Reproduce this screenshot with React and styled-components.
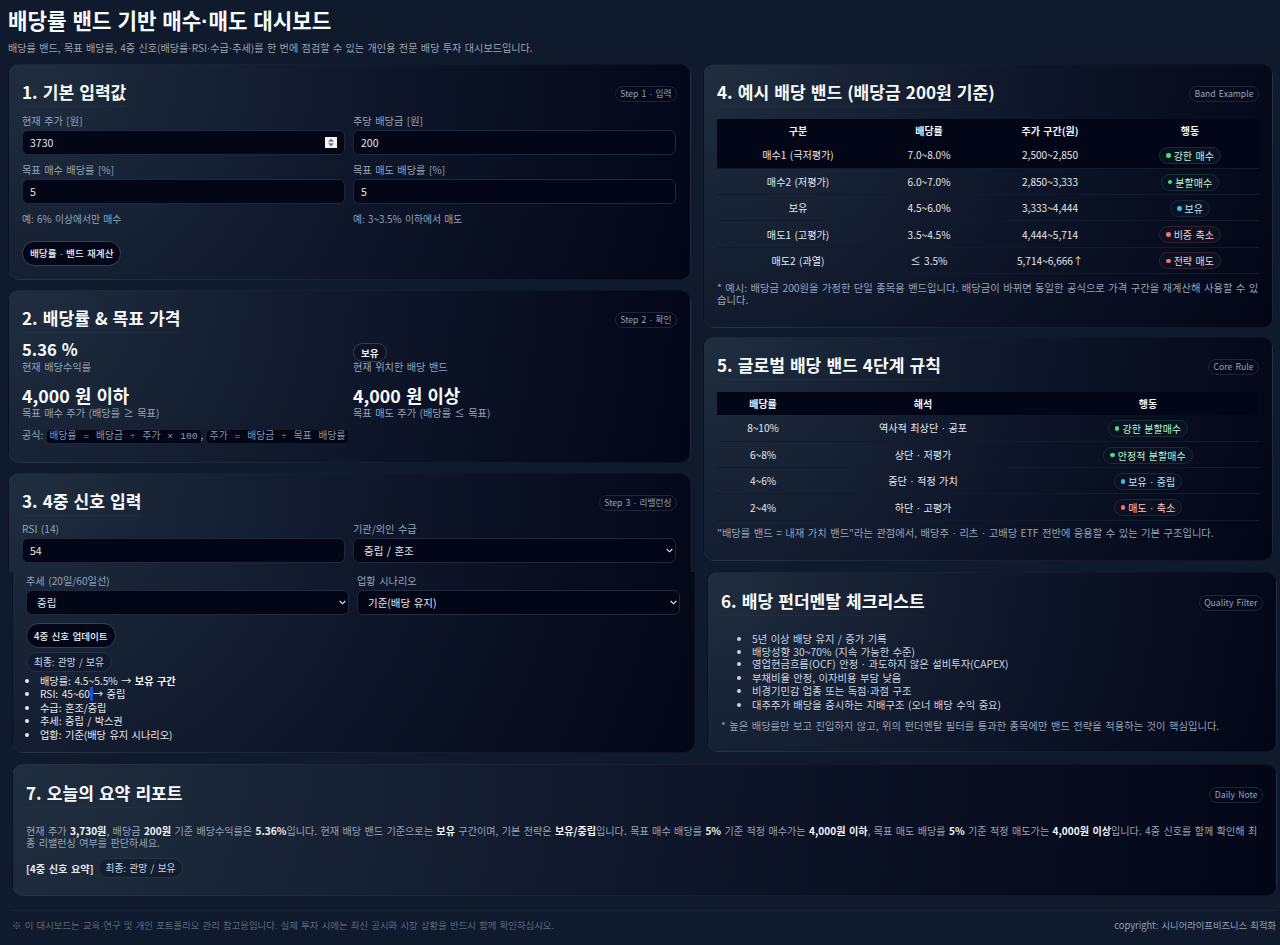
import React from 'react';
import styled, { createGlobalStyle } from 'styled-components';

const GlobalStyle = createGlobalStyle`
  * { box-sizing: border-box; }
  html, body { margin: 0; padding: 0; background: #0f1a2c; }
  body {
    font-family: "Noto Sans CJK KR", "Noto Sans", sans-serif;
    color: #e5e7eb;
    font-size: 10.5px;
    word-spacing: 0.11em;
  }
`;

const Page = styled.div`
  width: 1280px;
  height: 945px;
  overflow: hidden;
`;

const Header = styled.header`
  padding: 6px 8px 0;
  height: 63.5px;
`;

const Title = styled.h1`
  margin: 0;
  font-size: 21.2px;
  line-height: 28px;
  font-weight: 700;
  color: #f8fafc;
`;

const Subtitle = styled.p`
  margin: 5px 0 0;
  font-size: 10.1px;
  line-height: 14px;
  color: #9ca3af;
`;

const Dot = styled.span`
  font-family: "Liberation Sans", sans-serif;
`;

const Grid = styled.div`
  display: grid;
  grid-template-columns: 683px 570px;
  column-gap: 12px;
  padding-left: ${props => (props.$shifted ? '12px' : '8px')};
`;

const Column = styled.div`
  display: flex;
  flex-direction: column;
  gap: ${props => props.$gap || 10}px;
`;

const Card = styled.section`
  border: 1px solid rgba(148, 163, 184, 0.06);
  border-radius: 12px;
  padding: 14px 13px 13px;
  background: radial-gradient(circle at top left, #1f2e3f 0%, #0f172a 50%, #020617 100%);
  height: ${props => props.$height}px;
`;

const CardTop = styled(Card)`
  border-bottom: none;
  border-radius: 12px 12px 0 0;
  background-size: 683px 280px;
  overflow: hidden;
`;

const CardBottom = styled(Card)`
  border-top: none;
  border-radius: 0 0 12px 12px;
  background-size: 683px 280px;
  background-position: 0 -100px;
  padding-top: 2px;
`;

const WideCard = styled(Card)`
  width: 1265px;
  margin: 11.5px 0 0 12px;
`;

const CardHead = styled.div`
  display: flex;
  align-items: center;
  justify-content: space-between;
  height: 31px;
  margin-bottom: ${props => props.$after || 0}px;
`;

const CardTitle = styled.h2`
  margin: 0 0 3px;
  font-size: 17.1px;
  line-height: 28px;
  font-weight: 700;
  color: #f8fafc;
  border-bottom: 1px solid rgba(148, 163, 184, 0.05);
`;

const StepPill = styled.span`
  font-size: 8.7px;
  line-height: 14px;
  padding: 0 4.5px;
  color: #94a3b8;
  border: 1px solid #1b2739;
  border-radius: 999px;
  white-space: nowrap;
`;

const FieldRow = styled.div`
  display: grid;
  grid-template-columns: 323px 323px;
  column-gap: 8px;
  margin-bottom: ${props => props.$after || 0}px;
`;

const Field = styled.label`
  display: block;
  position: relative;
`;

const FieldLabel = styled.span`
  display: block;
  font-size: 10.2px;
  line-height: 14px;
  margin-bottom: 2px;
  color: #94a3b8;
`;

const TextInput = styled.input`
  display: block;
  width: 100%;
  height: 25px;
  padding: 0 7px;
  background: #020617;
  color: #e5e7eb;
  border: 1px solid #1e293b;
  border-radius: 6px;
  font-family: "Noto Sans CJK KR", "Noto Sans", sans-serif;
  font-size: 10.5px;
  outline: none;
`;

const Select = styled.select`
  display: block;
  width: 100%;
  height: 25px;
  padding: 0 10px;
  appearance: none;
  background: #020617;
  color: #e5e7eb;
  border: 1px solid #1e293b;
  border-radius: 6px;
  font-family: "Noto Sans CJK KR", "Noto Sans", sans-serif;
  font-size: 10.5px;
  word-spacing: 0.11em;
  outline: none;
`;

const Chevron = styled.svg`
  position: absolute;
  right: 3px;
  bottom: 10px;
  width: 7px;
  height: 5px;
  pointer-events: none;
`;

const Spinner = styled.span`
  position: absolute;
  right: 8px;
  bottom: 7px;
  width: 12px;
  height: 11px;
  background: #f4f4f5;
  display: flex;
  align-items: center;
  justify-content: center;
`;

const Hint = styled.p`
  margin: 0;
  font-size: 9.8px;
  line-height: 14px;
  color: #94a3b8;
`;

const ActionButton = styled.button`
  display: block;
  height: 25px;
  padding: 0 7px;
  border-radius: 999px;
  border: 1px solid #334155;
  background: #020617;
  color: #f1f5f9;
  font-family: "Noto Sans CJK KR", "Noto Sans", sans-serif;
  font-size: 9.6px;
  font-weight: 500;
  word-spacing: 0.11em;
  margin-top: ${props => props.$top || 0}px;
`;

const StatGrid = styled.div`
  display: grid;
  grid-template-columns: 323px 323px;
  column-gap: 8px;
`;

const Stat = styled.div`
  height: ${props => props.$height}px;
  display: flex;
  flex-direction: column;
  justify-content: flex-end;
`;

const StatValue = styled.div`
  font-size: ${props => props.$size}px;
  line-height: ${props => props.$size + 3}px;
  font-weight: 700;
  color: #f8fafc;
`;

const StatLabel = styled.div`
  font-size: 10.2px;
  line-height: 13px;
  color: #94a3b8;
`;

const PlainPill = styled.span`
  display: inline-flex;
  align-self: flex-start;
  align-items: center;
  height: 19px;
  padding: 0 7px;
  margin-bottom: -2px;
  border: 1px solid #334155;
  border-radius: 999px;
  background: #0b1222;
  color: #f1f5f9;
  font-size: 9.6px;
  font-weight: 700;
`;

const Formula = styled.p`
  margin: 9px 0 0;
  font-size: 10px;
  line-height: 14px;
  color: #94a3b8;
`;

const Code = styled.code`
  font-family: "Liberation Mono", "Noto Sans CJK KR", monospace;
  font-size: 9.7px;
  padding: 1px 3px;
  background: #020617;
  border-radius: 4px;
  color: #8a99ae;
`;

const ResultPill = styled.span`
  display: inline-flex;
  align-items: center;
  height: 20px;
  padding: 0 7px;
  margin-top: ${props => props.$top || 0}px;
  border: 1px solid #263244;
  border-radius: 999px;
  color: #cbd5e1;
  font-size: 9.7px;
  font-weight: 400;
  background: rgba(15, 23, 42, 0.6);
`;

const SignalList = styled.ul`
  margin: 2px 0 0;
  padding-left: 14px;
  font-size: 10.2px;
  line-height: 13.2px;
  color: #e5e7eb;

  strong {
    color: #f8fafc;
  }
`;

const Selection = styled.span`
  display: inline-block;
  width: 3px;
  height: 14px;
  background: #1d4ed8;
  vertical-align: top;
`;

const Table = styled.table`
  width: 542px;
  border-collapse: collapse;
  table-layout: fixed;
  font-size: 10.1px;
`;

const HeadCell = styled.th`
  height: 23.5px;
  padding: 0;
  background: #020617;
  color: #f1f5f9;
  font-weight: 700;
  font-size: 10px;
  text-align: center;
`;

const Row = styled.tr`
  background: ${props => (props.$active ? '#020617' : 'transparent')};
`;

const Cell = styled.td`
  height: 26.3px;
  padding: 0;
  text-align: center;
  color: #e5e7eb;
  border-bottom: 1px solid #121b2b;
`;

const TONES = {
  buy: { dot: '#4ade80', text: '#bbf7d0', border: '#14302f' },
  hold: { dot: '#38bdf8', text: '#bae6fd', border: '#13293f' },
  sell: { dot: '#f87171', text: '#fecaca', border: '#33202c' },
};

const Badge = styled.span`
  display: inline-flex;
  align-items: center;
  gap: 3px;
  height: 17px;
  padding: 0 6px;
  border-radius: 999px;
  border: 1px solid ${props => TONES[props.$tone].border};
  color: ${props => TONES[props.$tone].text};
  font-size: 10px;
  background: #0a1122;

  &::before {
    content: '';
    width: 4.5px;
    height: 4.5px;
    border-radius: 50%;
    background: ${props => TONES[props.$tone].dot};
  }
`;

const BadgeText = styled.span`
  white-space: pre;
`;

const Note = styled.p`
  margin: ${props => props.$top || 8}px 0 0;
  font-size: 10.3px;
  line-height: 12.5px;
  color: #94a3b8;
`;

const CheckList = styled.ul`
  margin: 15px 0 0;
  padding-left: 31px;
  font-size: 10.3px;
  line-height: 12.7px;
  color: #cbd5e1;
`;

const Report = styled.p`
  margin: 15px 0 0;
  font-size: 10.1px;
  line-height: 12px;
  color: #94a3b8;

  strong {
    color: #f1f5f9;
  }
`;

const ReportSummary = styled.div`
  display: flex;
  align-items: center;
  gap: 4px;
  margin-top: 9px;
  font-size: 10.2px;
  font-weight: 700;
  color: #e5e7eb;
`;

const Footer = styled.footer`
  display: flex;
  justify-content: space-between;
  align-items: center;
  width: 1264px;
  height: 30px;
  margin: 13.5px 0 0 12px;
  border-top: 1px solid #182335;
  font-size: 9.4px;
  color: #5b6b80;
`;

const Copyright = styled.span`
  font-size: 9.3px;
  color: #94a3b8;
`;

const SpinnerIcon = () => (
  <svg width="8" height="9" viewBox="0 0 8 9">
    <path d="M4 0.5 L7 3.7 H1 Z M4 8.5 L1 5.3 H7 Z" fill="#71717a" />
  </svg>
);

const SelectArrow = () => (
  <Chevron viewBox="0 0 7 5">
    <path d="M0.7 1 L3.5 3.8 L6.3 1" fill="none" stroke="#e5e7eb" strokeWidth="1.1" />
  </Chevron>
);

// the middle dot is much narrower in the reference than in the CJK font
const dotted = text =>
  text.split('·').map((part, index) =>
    index === 0 ? (
      part
    ) : (
      <React.Fragment key={index}>
        <Dot>·</Dot>
        {part}
      </React.Fragment>
    ),
  );

const bandRows = [
  ['매수1 (극저평가)', '7.0~8.0%', '2,500~2,850', 'buy', '강한 매수'],
  ['매수2 (저평가)', '6.0~7.0%', '2,850~3,333', 'buy', '분할매수'],
  ['보유', '4.5~6.0%', '3,333~4,444', 'hold', '보유'],
  ['매도1 (고평가)', '3.5~4.5%', '4,444~5,714', 'sell', '비중 축소'],
  ['매도2 (과열)', '≤ 3.5%', '5,714~6,666↑', 'sell', '전략 매도'],
];

const ruleRows = [
  ['8~10%', '역사적 최상단 · 공포', 'buy', '강한 분할매수'],
  ['6~8%', '상단 · 저평가', 'buy', '안정적 분할매수'],
  ['4~6%', '중단 · 적정 가치', 'hold', '보유 · 중립'],
  ['2~4%', '하단 · 고평가', 'sell', '매도 · 축소'],
];

const checks = [
  '5년 이상 배당 유지 / 증가 기록',
  '배당성향 30~70% (지속 가능한 수준)',
  '영업현금흐름(OCF) 안정 · 과도하지 않은 설비투자(CAPEX)',
  '부채비율 안정, 이자비용 부담 낮음',
  '비경기민감 업종 또는 독점·과점 구조',
  '대주주가 배당을 중시하는 지배구조 (오너 배당 수익 중요)',
];

export default function App() {
  return (
    <Page>
      <GlobalStyle />
      <Header>
        <Title>{dotted('배당률 밴드 기반 매수·매도 대시보드')}</Title>
        <Subtitle>
          {dotted('배당률 밴드, 목표 배당률, 4중 신호(배당률·RSI·수급·추세)를 한 번에 점검할 수 있는 개인용 전문 배당 투자 대시보드입니다.')}
        </Subtitle>
      </Header>

      <Grid>
        <Column>
          <Card $height={216}>
            <CardHead $after={4}>
              <CardTitle>1. 기본 입력값</CardTitle>
              <StepPill>{dotted('Step 1 · 입력')}</StepPill>
            </CardHead>
            <FieldRow $after={8}>
              <Field>
                <FieldLabel>현재 주가 [원]</FieldLabel>
                <TextInput defaultValue="3730" />
                <Spinner>
                  <SpinnerIcon />
                </Spinner>
              </Field>
              <Field>
                <FieldLabel>주당 배당금 [원]</FieldLabel>
                <TextInput defaultValue="200" />
              </Field>
            </FieldRow>
            <FieldRow $after={8}>
              <Field>
                <FieldLabel>목표 매수 배당률 [%]</FieldLabel>
                <TextInput defaultValue="5" />
              </Field>
              <Field>
                <FieldLabel>목표 매도 배당률 [%]</FieldLabel>
                <TextInput defaultValue="5" />
              </Field>
            </FieldRow>
            <FieldRow>
              <Hint>예: 6% 이상에서만 매수</Hint>
              <Hint>예: 3~3.5% 이하에서 매도</Hint>
            </FieldRow>
            <ActionButton $top={15}>{dotted('배당률 · 밴드 재계산')}</ActionButton>
          </Card>

          <Card $height={173}>
            <CardHead $after={4.5}>
              <CardTitle>2. 배당률 &amp; 목표 가격</CardTitle>
              <StepPill>{dotted('Step 2 · 확인')}</StepPill>
            </CardHead>
            <StatGrid>
              <Stat $height={33}>
                <StatValue $size={16.6}>5.36 %</StatValue>
                <StatLabel>현재 배당수익률</StatLabel>
              </Stat>
              <Stat $height={33}>
                <PlainPill>보유</PlainPill>
                <StatLabel>현재 위치한 배당 밴드</StatLabel>
              </Stat>
              <Stat $height={46}>
                <StatValue $size={17.8}>4,000 원 이하</StatValue>
                <StatLabel>목표 매수 주가 (배당률 ≥ 목표)</StatLabel>
              </Stat>
              <Stat $height={46}>
                <StatValue $size={17.8}>4,000 원 이상</StatValue>
                <StatLabel>목표 매도 주가 (배당률 ≤ 목표)</StatLabel>
              </Stat>
            </StatGrid>
            <Formula>
              공식: <Code>배당률 = 배당금 ÷ 주가 × 100</Code>, <Code>주가 = 배당금 ÷ 목표 배당률</Code>
            </Formula>
          </Card>

          <CardTop $height={99.5}>
            <CardHead $after={3.5}>
              <CardTitle>3. 4중 신호 입력</CardTitle>
              <StepPill>{dotted('Step 3 · 리밸런싱')}</StepPill>
            </CardHead>
            <FieldRow>
              <Field>
                <FieldLabel>RSI (14)</FieldLabel>
                <TextInput defaultValue="54" />
              </Field>
              <Field>
                <FieldLabel>기관/외인 수급</FieldLabel>
                <Select defaultValue="mixed">
                  <option value="mixed">중립 / 혼조</option>
                </Select>
                <SelectArrow />
              </Field>
            </FieldRow>
          </CardTop>
        </Column>

        <Column $gap={9}>
          <Card $height={264}>
            <CardHead $after={9}>
              <CardTitle>4. 예시 배당 밴드 (배당금 200원 기준)</CardTitle>
              <StepPill>Band Example</StepPill>
            </CardHead>
            <Table>
              <colgroup>
                <col width="162" />
                <col width="100" />
                <col width="142" />
                <col width="138" />
              </colgroup>
              <thead>
                <tr>
                  <HeadCell>구분</HeadCell>
                  <HeadCell>배당률</HeadCell>
                  <HeadCell>주가 구간(원)</HeadCell>
                  <HeadCell>행동</HeadCell>
                </tr>
              </thead>
              <tbody>
                {bandRows.map((row, index) => (
                  <Row key={row[0]} $active={index === 0}>
                    <Cell>{row[0]}</Cell>
                    <Cell>{row[1]}</Cell>
                    <Cell>{row[2]}</Cell>
                    <Cell>
                      <Badge $tone={row[3]}>
                        <BadgeText>{row[4]}</BadgeText>
                      </Badge>
                    </Cell>
                  </Row>
                ))}
              </tbody>
            </Table>
            <Note>
              * 예시: 배당금 200원을 가정한 단일 종목용 밴드입니다. 배당금이 바뀌면 동일한 공식으로 가격 구간을 재계산해 사용할 수 있습니다.
            </Note>
          </Card>

          <Card $height={224.5}>
            <CardHead $after={9}>
              <CardTitle>5. 글로벌 배당 밴드 4단계 규칙</CardTitle>
              <StepPill>Core Rule</StepPill>
            </CardHead>
            <Table>
              <colgroup>
                <col width="92" />
                <col width="228" />
                <col width="222" />
              </colgroup>
              <thead>
                <tr>
                  <HeadCell>배당률</HeadCell>
                  <HeadCell>해석</HeadCell>
                  <HeadCell>행동</HeadCell>
                </tr>
              </thead>
              <tbody>
                {ruleRows.map(row => (
                  <Row key={row[0]}>
                    <Cell>{row[0]}</Cell>
                    <Cell>{dotted(row[1])}</Cell>
                    <Cell>
                      <Badge $tone={row[2]}>
                        <BadgeText>{dotted(row[3])}</BadgeText>
                      </Badge>
                    </Cell>
                  </Row>
                ))}
              </tbody>
            </Table>
            <Note $top={6.5}>
              {dotted('"배당률 밴드 = 내재 가치 밴드"라는 관점에서, 배당주 · 리츠 · 고배당 ETF 전반에 응용할 수 있는 기본 구조입니다.')}
            </Note>
          </Card>
        </Column>
      </Grid>

      <Grid $shifted>
        <CardBottom $height={180.5}>
          <FieldRow>
            <Field>
              <FieldLabel>추세 (20일/60일선)</FieldLabel>
              <Select defaultValue="neutral">
                <option value="neutral">중립</option>
              </Select>
              <SelectArrow />
            </Field>
            <Field>
              <FieldLabel>업황 시나리오</FieldLabel>
              <Select defaultValue="base">
                <option value="base">기준(배당 유지)</option>
              </Select>
              <SelectArrow />
            </Field>
          </FieldRow>
          <ActionButton $top={8}>4중 신호 업데이트</ActionButton>
          <ResultPill $top={4}>최종: 관망 / 보유</ResultPill>
          <SignalList>
            <li>
              배당률: 4.5~5.5% → <strong>보유 구간</strong>
            </li>
            <li>
              RSI: 45~60
              <Selection />→ 중립
            </li>
            <li>수급: 혼조/중립</li>
            <li>추세: 중립 / 박스권</li>
            <li>업황: 기준(배당 유지 시나리오)</li>
          </SignalList>
        </CardBottom>

        <Card $height={180}>
          <CardHead>
            <CardTitle>6. 배당 펀더멘탈 체크리스트</CardTitle>
            <StepPill>Quality Filter</StepPill>
          </CardHead>
          <CheckList>
            {checks.map(item => (
              <li key={item}>{dotted(item)}</li>
            ))}
          </CheckList>
          <Note $top={9}>
            * 높은 배당률만 보고 진입하지 않고, 위의 펀더멘탈 필터를 통과한 종목에만 밴드 전략을 적용하는 것이 핵심입니다.
          </Note>
        </Card>
      </Grid>

      <WideCard $height={132}>
        <CardHead>
          <CardTitle>7. 오늘의 요약 리포트</CardTitle>
          <StepPill>Daily Note</StepPill>
        </CardHead>
        <Report>
          현재 주가 <strong>3,730원</strong>, 배당금 <strong>200원</strong> 기준 배당수익률은 <strong>5.36%</strong>입니다. 현재 배당 밴드 기준으로는 <strong>보유</strong> 구간이며, 기본 전략은 <strong>보유/중립</strong>입니다. 목표 매수 배당률 <strong>5%</strong> 기준 적정 매수가는 <strong>4,000원 이하</strong>, 목표 매도 배당률 <strong>5%</strong> 기준 적정 매도가는 <strong>4,000원 이상</strong>입니다. 4중 신호를 함께 확인해 최종 리밸런싱 여부를 판단하세요.
        </Report>
        <ReportSummary>
          [4중 신호 요약]
          <ResultPill>최종: 관망 / 보유</ResultPill>
        </ReportSummary>
      </WideCard>

      <Footer>
        <span>
          {dotted('※ 이 대시보드는 교육·연구 및 개인 포트폴리오 관리 참고용입니다. 실제 투자 시에는 최신 공시와 시장 상황을 반드시 함께 확인하십시오.')}
        </span>
        <Copyright>copyright: 시니어라이프비즈니스 최적화</Copyright>
      </Footer>
    </Page>
  );
}
